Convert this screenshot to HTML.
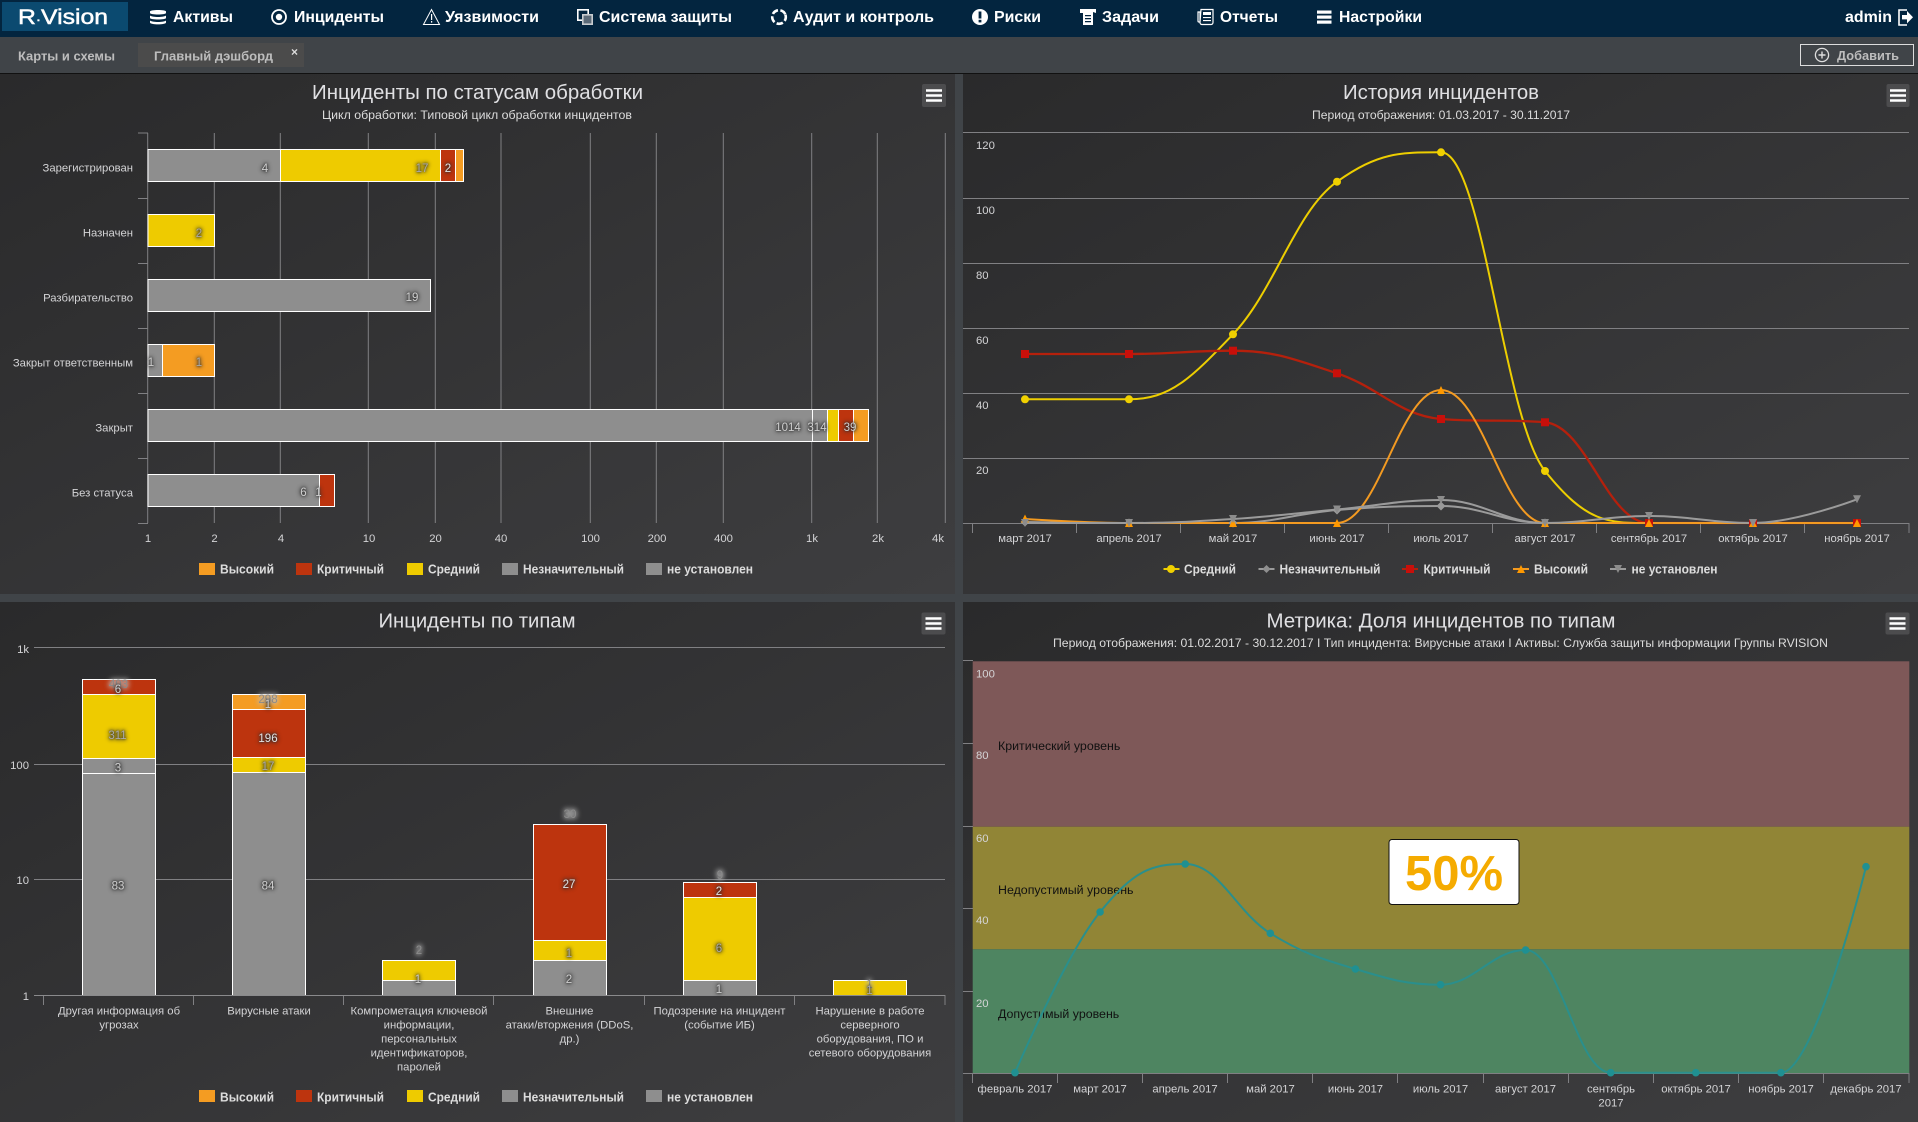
<!DOCTYPE html>
<html lang="ru"><head><meta charset="utf-8"><title>RVision</title>
<style>
html,body{margin:0;padding:0;background:#404448;width:1918px;height:1122px;overflow:hidden}
svg{display:block;font-family:"Liberation Sans","DejaVu Sans",sans-serif}
.n{font-size:16px;font-weight:bold;fill:#fff}
.t{font-size:13px;font-weight:bold;fill:#bdbdbd}
.h{font-size:20px;fill:#e0e0e3}
.s{font-size:12px;fill:#dcdcdc}
.a{font-size:11.3px;fill:#d4d4d6}
.m{text-anchor:middle}
.e{text-anchor:end}
.g{font-size:13px;font-weight:bold;fill:#dcdcdc}
.k{font-size:12.4px;fill:#111}
.d text{font-size:11.5px;fill:#d0d0d0;text-anchor:middle}
.d{filter:drop-shadow(0 0 2px #222) drop-shadow(0 0 1px #333)}
.w text{font-size:11.5px;fill:#8c8c8c;text-anchor:middle}
.w{filter:drop-shadow(0 0 3px #c8c8c8) drop-shadow(0 0 2px #bbb)}
.b rect{stroke:#fff;stroke-width:1}
</style></head><body>
<svg width="1918" height="1122" viewBox="0 0 1918 1122" xmlns="http://www.w3.org/2000/svg">
<defs>
<linearGradient id="p" x1="0" y1="0" x2="1" y2="1"><stop offset="0" stop-color="#2a2a2b"/><stop offset="1" stop-color="#3e3e40"/></linearGradient>
</defs>
<rect width="1918" height="1122" fill="#404448"/>
<!-- nav -->
<rect width="1918" height="37" fill="#03253f"/>
<rect x="2" y="2" width="126" height="29" fill="#0b4a70"/>
<text x="18" y="24" font-size="21" fill="#fff" stroke="#fff" stroke-width="0.5" textLength="90" lengthAdjust="spacingAndGlyphs">R<tspan font-size="13">·</tspan>Vision</text>
<g fill="#fff">
<path d="M150 11.5C150 9.5 166 9.5 166 11.5V13C166 15 150 15 150 13ZM150 15.5C152 17.5 164 17.5 166 15.5V18C166 20 150 20 150 18ZM150 20.5C152 22.5 164 22.5 166 20.5V22.5C166 25 150 25 150 22.5Z"/>
<circle cx="279" cy="17" r="3.2"/>
<circle cx="279" cy="17" r="7" fill="none" stroke="#fff" stroke-width="1.8"/>
<path d="M431.5 9.5L439.5 24.5H423.5Z" fill="none" stroke="#fff" stroke-width="1"/><path d="M431 14h1.2v6H431zM431 21h1.2v1.6H431z"/>
<path d="M577 9h12v5h-1.6v-3.4h-8.8v8.8H582V21h-5z"/><rect x="582" y="14" width="11" height="11" fill="#c8ccd0"/><rect x="583.6" y="15.6" width="7.8" height="7.8" fill="#5b6a78"/>
<circle cx="779" cy="17" r="6.8" fill="none" stroke="#fff" stroke-width="2.6" stroke-dasharray="6.5 2.4" transform="rotate(-20 779 17)"/>
<circle cx="980" cy="17" r="8"/><rect x="978.6" y="11.5" width="2.8" height="7" fill="#03253f"/><rect x="978.6" y="19.8" width="2.8" height="2.6" fill="#03253f"/>
<path d="M1080 9h16v4l-3 -1v13h-10V13h-3z"/><path d="M1085 15h6v1.2h-6zM1085 18h6v1.2h-6zM1085 21h6v1.2h-6z" fill="#03253f"/>
<path d="M1201 9.5h12v13a2 2 0 0 1-2 2h-9a2 2 0 0 1-2-2zM1198 12h2v10h-1a1 1 0 0 1-1-1z" fill="none" stroke="#fff" stroke-width="1.2"/><path d="M1203 12h8v3h-8zM1203 17h8v1.1h-8zM1203 20h8v1.1h-8z"/>
<rect x="1317" y="10.5" width="14.5" height="3.2"/><rect x="1317" y="15.5" width="14.5" height="3.2"/><rect x="1317" y="20.5" width="14.5" height="3.2"/>
<path d="M1907 10h-8v15h8" fill="none" stroke="#fff" stroke-width="1.6"/><path d="M1902 15h5v-4l6 6.2-6 6.2v-4h-5z"/>
</g>
<text class="n" x="173" y="22" textLength="60" lengthAdjust="spacingAndGlyphs">Активы</text>
<text class="n" x="294" y="22" textLength="90" lengthAdjust="spacingAndGlyphs">Инциденты</text>
<text class="n" x="445" y="22" textLength="94" lengthAdjust="spacingAndGlyphs">Уязвимости</text>
<text class="n" x="599" y="22" textLength="133" lengthAdjust="spacingAndGlyphs">Система защиты</text>
<text class="n" x="793" y="22" textLength="141" lengthAdjust="spacingAndGlyphs">Аудит и контроль</text>
<text class="n" x="994" y="22" textLength="47" lengthAdjust="spacingAndGlyphs">Риски</text>
<text class="n" x="1102" y="22" textLength="57" lengthAdjust="spacingAndGlyphs">Задачи</text>
<text class="n" x="1220" y="22" textLength="58" lengthAdjust="spacingAndGlyphs">Отчеты</text>
<text class="n" x="1339" y="22" textLength="83" lengthAdjust="spacingAndGlyphs">Настройки</text>
<text class="n" x="1845" y="22" textLength="47" lengthAdjust="spacingAndGlyphs">admin</text>
<!-- tabs -->
<rect y="37" width="1918" height="36" fill="#404448"/>
<rect y="73" width="1918" height="1" fill="#111"/>
<text class="t" x="18" y="60.5" textLength="97" lengthAdjust="spacingAndGlyphs">Карты и схемы</text>
<rect x="138" y="43" width="166" height="24" fill="#4b4b4b"/>
<text class="t" x="154" y="60.5" textLength="119" lengthAdjust="spacingAndGlyphs">Главный дэшборд</text>
<text x="294.5" y="56" font-size="12" font-weight="bold" fill="#ddd" text-anchor="middle">×</text>
<rect x="1800.5" y="44.5" width="113" height="21" fill="none" stroke="#ddd"/>
<circle cx="1822" cy="55" r="6.6" fill="none" stroke="#ddd" stroke-width="1.3"/><path d="M1818.5 55h7M1822 51.5v7" stroke="#ddd" stroke-width="1.4"/>
<text class="t" x="1837" y="60" textLength="62" lengthAdjust="spacingAndGlyphs">Добавить</text>
<!-- panels -->
<rect x="0" y="74" width="955" height="520" fill="url(#p)"/>
<rect x="963" y="74" width="955" height="520" fill="url(#p)"/>
<rect x="0" y="602" width="955" height="520" fill="url(#p)"/>
<rect x="963" y="602" width="955" height="520" fill="url(#p)"/>

<!-- CHART 1 -->
<text class="h" x="312" y="99" textLength="331" lengthAdjust="spacingAndGlyphs">Инциденты по статусам обработки</text>
<text class="s" x="322" y="119" textLength="310" lengthAdjust="spacingAndGlyphs">Цикл обработки: Типовой цикл обработки инцидентов</text>
<rect x="922" y="84" width="24" height="23" rx="2" fill="#4c4c4e"/><path d="M926 90.5h16M926 95.5h16M926 100.5h16" stroke="#fff" stroke-width="2.6"/>
<path d="M147.7 133V523M214.3 133V523M280.3 133V523M368.3 133V523M435.3 133V523M501 133V523M590.3 133V523M656.3 133V523M723.3 133V523M811.7 133V523M877.3 133V523M945.3 133V523" stroke="#808083" fill="none"/>
<path d="M138 133h10M138 198.5h10M138 263.5h10M138 328.5h10M138 393.5h10M138 458.5h10M138 523.5h10" stroke="#808083"/>
<g class="b">
<rect x="148" y="149.5" width="132.5" height="32" fill="#8e8e8e"/><rect x="280.5" y="149.5" width="160" height="32" fill="#eecb00"/><rect x="440.5" y="149.5" width="15" height="32" fill="#bd340e"/><rect x="455.5" y="149.5" width="8" height="32" fill="#f49c22"/>
<rect x="148" y="214.5" width="66.5" height="32" fill="#eecb00"/>
<rect x="148" y="279.5" width="282.5" height="32" fill="#8e8e8e"/>
<rect x="148" y="344.5" width="14.5" height="32" fill="#8e8e8e"/><rect x="162.5" y="344.5" width="52" height="32" fill="#f49c22"/>
<rect x="148" y="409.5" width="664.5" height="32" fill="#8e8e8e"/><rect x="812.5" y="409.5" width="15" height="32" fill="#8e8e8e"/><rect x="827.5" y="409.5" width="11" height="32" fill="#eecb00"/><rect x="838.5" y="409.5" width="15" height="32" fill="#bd340e"/><rect x="853.5" y="409.5" width="15" height="32" fill="#f49c22"/>
<rect x="148" y="474.5" width="171.5" height="32" fill="#8e8e8e"/><rect x="319.5" y="474.5" width="15" height="32" fill="#bd340e"/>
</g>
<g class="d">
<text x="265" y="172">4</text><text x="422" y="172" style="fill:#aaa">17</text><text x="448" y="172" style="fill:#e4e4e4">2</text>
<text x="199" y="237" style="fill:#aaa">2</text><text x="412" y="301">19</text>
<text x="151" y="366">1</text><text x="199" y="366" style="fill:#aaa">1</text>
<text x="788" y="431">1014</text><text x="817" y="431">314</text><text x="850" y="431">39</text>
<text x="303.5" y="496">6</text><text x="318.5" y="496">1</text>
</g>
<g class="a e">
<text x="133" y="171.5">Зарегистрирован</text><text x="133" y="236.5">Назначен</text><text x="133" y="301.5">Разбирательство</text><text x="133" y="366.5">Закрыт ответственным</text><text x="133" y="431.5">Закрыт</text><text x="133" y="496.5">Без статуса</text>
</g>
<g class="a m">
<text x="148" y="542">1</text><text x="214.5" y="542">2</text><text x="281" y="542">4</text><text x="369" y="542">10</text><text x="435.5" y="542">20</text><text x="501" y="542">40</text><text x="590.5" y="542">100</text><text x="657" y="542">200</text><text x="723.5" y="542">400</text><text x="812" y="542">1k</text><text x="878" y="542">2k</text><text x="938" y="542">4k</text>
</g>
<rect x="199" y="563" width="16" height="12" fill="#f49c22"/><text class="g" x="220" y="573.5" textLength="54" lengthAdjust="spacingAndGlyphs">Высокий</text>
<rect x="296" y="563" width="16" height="12" fill="#bd340e"/><text class="g" x="317" y="573.5" textLength="67" lengthAdjust="spacingAndGlyphs">Критичный</text>
<rect x="407" y="563" width="16" height="12" fill="#eecb00"/><text class="g" x="428" y="573.5" textLength="52" lengthAdjust="spacingAndGlyphs">Средний</text>
<rect x="502" y="563" width="16" height="12" fill="#8e8e8e"/><text class="g" x="523" y="573.5" textLength="101" lengthAdjust="spacingAndGlyphs">Незначительный</text>
<rect x="646" y="563" width="16" height="12" fill="#8e8e8e"/><text class="g" x="667" y="573.5" textLength="86" lengthAdjust="spacingAndGlyphs">не установлен</text>

<!-- CHART 2 -->
<text class="h" x="1343" y="99" textLength="196" lengthAdjust="spacingAndGlyphs">История инцидентов</text>
<text class="s" x="1312" y="119" textLength="258" lengthAdjust="spacingAndGlyphs">Период отображения: 01.03.2017 - 30.11.2017</text>
<rect x="1886.5" y="84" width="23" height="23" rx="2" fill="#4c4c4e"/><path d="M1890 90.5h16M1890 95.5h16M1890 100.5h16" stroke="#fff" stroke-width="2.6"/>
<path d="M963 132.5H1909M963 198.5H1909M963 263.5H1909M963 328.5H1909M963 393.5H1909M963 458.5H1909M963 523.5H1909" stroke="#808083"/>
<path d="M972.5 523v10M1076.5 523v10M1180.5 523v10M1284.5 523v10M1388.5 523v10M1492.5 523v10M1596.5 523v10M1700.5 523v10M1804.5 523v10M1909 523v10" stroke="#808083"/>
<g class="a"><text x="976" y="149">120</text><text x="976" y="214">100</text><text x="976" y="279">80</text><text x="976" y="344">60</text><text x="976" y="409">40</text><text x="976" y="474">20</text></g>
<g class="a m"><text x="1025" y="542">март 2017</text><text x="1129" y="542">апрель 2017</text><text x="1233" y="542">май 2017</text><text x="1337" y="542">июнь 2017</text><text x="1441" y="542">июль 2017</text><text x="1545" y="542">август 2017</text><text x="1649" y="542">сентябрь 2017</text><text x="1753" y="542">октябрь 2017</text><text x="1857" y="542">ноябрь 2017</text></g>
<g fill="none" stroke-width="2">
<path stroke="#edce00" d="M1025 399.3C1025 399.3 1087.4 399.3 1129 399.3C1170.6 399.3 1191.4 377.8 1233 334.3C1274.6 290.8 1295.4 211.1 1337 181.7C1378.6 152.3 1399.4 152.3 1441 152.3C1482.6 152.3 1503.4 419 1545 471C1586.6 523 1607.4 523 1649 523C1690.6 523 1711.4 523 1753 523C1794.6 523 1815.4 523 1857 523"/>
<path stroke="#9b9b9b" d="M1025 522C1025 522 1087.4 523 1129 523L1233 523C1274.6 523 1295.4 513.4 1337 510C1378.6 506.6 1399.4 506 1441 506C1482.6 506 1503.4 523 1545 523L1857 523"/>
<path stroke="#b5200c" stroke-width="2.3" d="M1025 354C1025 354 1087.4 354 1129 354C1170.6 354 1191.4 350.7 1233 350.7C1274.6 350.7 1295.4 359.6 1337 373.3C1378.6 387 1399.4 415.7 1441 419C1482.6 422.3 1503.4 419 1545 422.3C1586.6 425.6 1607.4 523 1649 523C1690.6 523 1711.4 523 1753 523C1794.6 523 1815.4 523 1857 523"/>
<path stroke="#f39a21" d="M1025 519C1025 519 1087.4 523 1129 523L1337 523C1378.6 523 1399.4 390 1441 390C1482.6 390 1503.4 523 1545 523L1857 523"/>
<path stroke="#9b9b9b" d="M1025 523L1129 523C1170.6 523 1191.4 521.7 1233 519C1274.6 516.3 1295.4 513.3 1337 509.5C1378.6 505.7 1399.4 500 1441 500C1482.6 500 1503.4 523 1545 523C1586.6 523 1607.4 516 1649 516C1690.6 516 1711.4 523 1753 523C1794.6 523 1857 499.3 1857 499.3"/>
</g>
<g fill="#f0d000"><circle cx="1025" cy="399.3" r="4"/><circle cx="1129" cy="399.3" r="4"/><circle cx="1233" cy="334.3" r="4"/><circle cx="1337" cy="181.7" r="4"/><circle cx="1441" cy="152.3" r="4"/><circle cx="1545" cy="471" r="4"/></g>
<g fill="#9a9a9a"><path d="M1025 517.5l4.5 4.5-4.5 4.5-4.5-4.5zM1129 518.5l4.5 4.5-4.5 4.5-4.5-4.5zM1233 518.5l4.5 4.5-4.5 4.5-4.5-4.5zM1337 505.5l4.5 4.5-4.5 4.5-4.5-4.5zM1441 501.5l4.5 4.5-4.5 4.5-4.5-4.5zM1545 518.5l4.5 4.5-4.5 4.5-4.5-4.5z"/></g>
<g fill="#c80f0a"><rect x="1021" y="350" width="8" height="8"/><rect x="1125" y="350" width="8" height="8"/><rect x="1229" y="346.7" width="8" height="8"/><rect x="1333" y="369.3" width="8" height="8"/><rect x="1437" y="415" width="8" height="8"/><rect x="1541" y="418.3" width="8" height="8"/><rect x="1645" y="519" width="8" height="8"/><rect x="1749" y="519" width="8" height="8"/><rect x="1853" y="519" width="8" height="8"/></g>
<g fill="#ff9900"><path d="M1025 514.5l4 8h-8zM1129 519l4 8h-8zM1233 519l4 8h-8zM1337 519l4 8h-8zM1441 386l4 8h-8zM1545 519l4 8h-8zM1649 519l4 8h-8zM1753 519l4 8h-8zM1857 519l4 8h-8z"/></g>
<g fill="#8c8c8c"><path d="M1021 519h8l-4 8zM1125 519h8l-4 8zM1229 515h8l-4 8zM1333 505.5h8l-4 8zM1437 496h8l-4 8zM1541 519h8l-4 8zM1645 512h8l-4 8zM1749 519h8l-4 8zM1853 495.3h8l-4 8z"/></g>
<!-- legend 2 -->
<path d="M1163.5 569h16" stroke="#edce00" stroke-width="2"/><circle cx="1171" cy="569" r="4" fill="#f0d000"/><text class="g" x="1184" y="573.5" textLength="52" lengthAdjust="spacingAndGlyphs">Средний</text>
<path d="M1258.5 569h16" stroke="#9b9b9b" stroke-width="2"/><path d="M1266.5 565l4 4-4 4-4-4z" fill="#8f8f8f"/><text class="g" x="1279.5" y="573.5" textLength="101" lengthAdjust="spacingAndGlyphs">Незначительный</text>
<path d="M1402 569h16" stroke="#b5200c" stroke-width="2"/><rect x="1406" y="565" width="8" height="8" fill="#c80f0a"/><text class="g" x="1423.5" y="573.5" textLength="67" lengthAdjust="spacingAndGlyphs">Критичный</text>
<path d="M1513 569h16" stroke="#f39a21" stroke-width="2"/><path d="M1521 565l4 8h-8z" fill="#ff9900"/><text class="g" x="1534" y="573.5" textLength="54" lengthAdjust="spacingAndGlyphs">Высокий</text>
<path d="M1610 569h16" stroke="#9b9b9b" stroke-width="2"/><path d="M1614 565h8l-4 8z" fill="#8c8c8c"/><text class="g" x="1631.5" y="573.5" textLength="86" lengthAdjust="spacingAndGlyphs">не установлен</text>

<!-- CHART 3 -->
<text class="h" x="378.5" y="627.5" textLength="197" lengthAdjust="spacingAndGlyphs">Инциденты по типам</text>
<rect x="921.5" y="612.5" width="24" height="22" rx="2" fill="#4c4c4e"/><path d="M925.5 618.5h16M925.5 623.5h16M925.5 628.5h16" stroke="#fff" stroke-width="2.6"/>
<path d="M34 647.5H945M34 764.5H945M34 879.5H945M34 995.5H945" stroke="#808083"/>
<path d="M43.5 995v10M193.5 995v10M343.5 995v10M493.5 995v10M644.5 995v10M794.5 995v10M945 995v10" stroke="#808083"/>
<g class="a e"><text x="29" y="653">1k</text><text x="29" y="769">100</text><text x="29" y="884">10</text><text x="29" y="1000">1</text></g>
<g class="b">
<rect x="82.5" y="773.5" width="73" height="222" fill="#8e8e8e"/><rect x="82.5" y="758.5" width="73" height="15" fill="#8e8e8e"/><rect x="82.5" y="694.5" width="73" height="64" fill="#eecb00"/><rect x="82.5" y="679.5" width="73" height="15" fill="#bd340e"/>
<rect x="232.5" y="772.5" width="73" height="223" fill="#8e8e8e"/><rect x="232.5" y="757.5" width="73" height="15" fill="#eecb00"/><rect x="232.5" y="709.5" width="73" height="48" fill="#bd340e"/><rect x="232.5" y="694.5" width="73" height="15" fill="#f49c22"/>
<rect x="382.5" y="980.5" width="73" height="15" fill="#8e8e8e"/><rect x="382.5" y="960.5" width="73" height="20" fill="#eecb00"/>
<rect x="533.5" y="960.5" width="73" height="35" fill="#8e8e8e"/><rect x="533.5" y="940.5" width="73" height="20" fill="#eecb00"/><rect x="533.5" y="824.5" width="73" height="116" fill="#bd340e"/>
<rect x="683.5" y="980.5" width="73" height="15" fill="#8e8e8e"/><rect x="683.5" y="897.5" width="73" height="83" fill="#eecb00"/><rect x="683.5" y="882.5" width="73" height="15" fill="#bd340e"/>
<rect x="833.5" y="980.5" width="73" height="15" fill="#eecb00"/>
</g>
<path d="M34 995.5H945" stroke="#8a8a8c"/>
<g class="w"><text x="118.5" y="688">493</text><text x="268" y="703">298</text><text x="419" y="954">2</text><text x="570" y="818">30</text><text x="720" y="879">9</text><text x="869.5" y="988">1</text></g>
<g class="d">
<text x="118" y="693">6</text><text x="117.5" y="739" style="fill:#aaa">311</text><text x="118" y="771.5">3</text><text x="118" y="889.5">83</text>
<text x="268" y="708">1</text><text x="268" y="742" style="fill:#e4e4e4">196</text><text x="268" y="770" style="fill:#aaa">17</text><text x="268" y="889.5">84</text>
<text x="418" y="983">1</text>
<text x="569" y="888" style="fill:#e4e4e4">27</text><text x="569" y="957" style="fill:#aaa">1</text><text x="569" y="983">2</text>
<text x="719" y="895" style="fill:#e4e4e4">2</text><text x="719" y="952" style="fill:#aaa">6</text><text x="719" y="993">1</text>
<text x="869.5" y="994" style="fill:#aaa">1</text>
</g>
<g class="a m">
<text x="119" y="1014.5">Другая информация об</text><text x="119" y="1028.5">угрозах</text>
<text x="269" y="1014.5">Вирусные атаки</text>
<text x="419" y="1014.5">Компрометация ключевой</text><text x="419" y="1028.5">информации,</text><text x="419" y="1042.5">персональных</text><text x="419" y="1056.5">идентификаторов,</text><text x="419" y="1070.5">паролей</text>
<text x="569.5" y="1014.5">Внешние</text><text x="569.5" y="1028.5">атаки/вторжения (DDoS,</text><text x="569.5" y="1042.5">др.)</text>
<text x="719.5" y="1014.5">Подозрение на инцидент</text><text x="719.5" y="1028.5">(событие ИБ)</text>
<text x="870" y="1014.5">Нарушение в работе</text><text x="870" y="1028.5">серверного</text><text x="870" y="1042.5">оборудования, ПО и</text><text x="870" y="1056.5">сетевого оборудования</text>
</g>
<rect x="199" y="1090" width="16" height="12" fill="#f49c22"/><text class="g" x="220" y="1101.5" textLength="54" lengthAdjust="spacingAndGlyphs">Высокий</text>
<rect x="296" y="1090" width="16" height="12" fill="#bd340e"/><text class="g" x="317" y="1101.5" textLength="67" lengthAdjust="spacingAndGlyphs">Критичный</text>
<rect x="407" y="1090" width="16" height="12" fill="#eecb00"/><text class="g" x="428" y="1101.5" textLength="52" lengthAdjust="spacingAndGlyphs">Средний</text>
<rect x="502" y="1090" width="16" height="12" fill="#8e8e8e"/><text class="g" x="523" y="1101.5" textLength="101" lengthAdjust="spacingAndGlyphs">Незначительный</text>
<rect x="646" y="1090" width="16" height="12" fill="#8e8e8e"/><text class="g" x="667" y="1101.5" textLength="86" lengthAdjust="spacingAndGlyphs">не установлен</text>

<!-- CHART 4 -->
<text class="h" x="1266.5" y="627.5" textLength="349" lengthAdjust="spacingAndGlyphs">Метрика: Доля инцидентов по типам</text>
<text class="s" x="1053" y="647" textLength="775" lengthAdjust="spacingAndGlyphs">Период отображения: 01.02.2017 - 30.12.2017 I Тип инцидента: Вирусные атаки I Активы: Служба защиты информации Группы RVISION</text>
<rect x="1885.5" y="612.5" width="24" height="22" rx="2" fill="#4c4c4e"/><path d="M1889.5 618.5h16M1889.5 623.5h16M1889.5 628.5h16" stroke="#fff" stroke-width="2.6"/>
<rect x="972.7" y="661.3" width="936.6" height="165.4" fill="#7e5858"/>
<rect x="972.7" y="826.7" width="936.6" height="122.6" fill="#918536"/>
<rect x="972.7" y="949.3" width="936.6" height="124" fill="#4e8561"/>
<path d="M963 660.5h10M963 743.5h10M963 826.5h10M963 908.5h10M963 991.5h10M963 1073.5H1909" stroke="#808083"/>
<path d="M972.5 1073v10M1057.5 1073v10M1142.5 1073v10M1227.5 1073v10M1312.5 1073v10M1397.5 1073v10M1483.5 1073v10M1568.5 1073v10M1653.5 1073v10M1738.5 1073v10M1823.5 1073v10M1909 1073v10" stroke="#808083"/>
<g class="a"><text x="976" y="677.5">100</text><text x="976" y="759">80</text><text x="976" y="842">60</text><text x="976" y="924">40</text><text x="976" y="1007">20</text></g>
<text class="k" x="998" y="750">Критический уровень</text>
<text class="k" x="998" y="894">Недопустимый уровень</text>
<text class="k" x="998" y="1018">Допустимый уровень</text>
<path fill="none" stroke="#2a8f8c" stroke-width="2" d="M1015 1072.7C1015 1072.7 1066.06 953.7 1100.1 912C1134.1 870.3 1151.2 864 1185.2 864C1219.2 864 1236.3 912.3 1270.3 933.3C1304.3 954.3 1321.4 958.7 1355.4 969C1389.4 979.3 1406.5 984.7 1440.5 984.7C1474.5 984.7 1491.6 950 1525.6 950C1559.6 950 1576.7 1072.7 1610.7 1072.7C1644.7 1072.7 1661.8 1072.7 1695.8 1072.7C1729.8 1072.7 1746.9 1072.7 1780.9 1072.7C1814.9 1072.7 1866 866.7 1866 866.7"/>
<g fill="#1f9092"><circle cx="1015" cy="1072.7" r="3.8"/><circle cx="1100.1" cy="912" r="3.8"/><circle cx="1185.2" cy="864" r="3.8"/><circle cx="1270.3" cy="933.3" r="3.8"/><circle cx="1355.4" cy="969" r="3.8"/><circle cx="1440.5" cy="984.7" r="3.8"/><circle cx="1525.6" cy="950" r="3.8"/><circle cx="1610.7" cy="1072.7" r="3.8"/><circle cx="1695.8" cy="1072.7" r="3.8"/><circle cx="1780.9" cy="1072.7" r="3.8"/><circle cx="1866" cy="866.7" r="3.8"/></g>
<rect x="1389" y="839.5" width="130" height="65" rx="3" fill="#fff" stroke="#111"/>
<text x="1454" y="890" font-size="49" font-weight="bold" fill="#f5ab00" text-anchor="middle">50%</text>
<g class="a m"><text x="1015" y="1092.5">февраль 2017</text><text x="1100" y="1092.5">март 2017</text><text x="1185" y="1092.5">апрель 2017</text><text x="1270.5" y="1092.5">май 2017</text><text x="1355.5" y="1092.5">июнь 2017</text><text x="1440.5" y="1092.5">июль 2017</text><text x="1525.5" y="1092.5">август 2017</text><text x="1611" y="1092.5">сентябрь</text><text x="1611" y="1106.5">2017</text><text x="1696" y="1092.5">октябрь 2017</text><text x="1781" y="1092.5">ноябрь 2017</text><text x="1866" y="1092.5">декабрь 2017</text></g>
</svg>
</body></html>
